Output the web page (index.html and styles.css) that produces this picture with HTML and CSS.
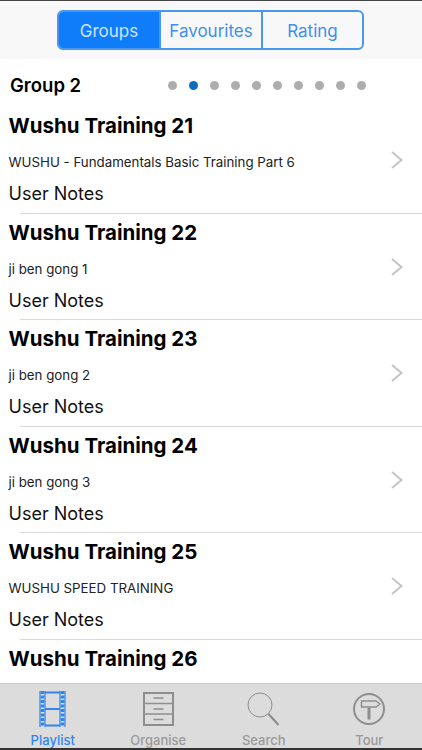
FILE: index.html
```html
<!doctype html>
<html>
<head>
<meta charset="utf-8">
<title>Playlist</title>
<link rel="stylesheet" href="styles.css">
</head>
<body>
<div class="screen">
	<div class="top">
		<div class="segment">
			<div class="seg current">Groups</div>
			<div class="seg">Favourites</div>
			<div class="seg">Rating</div>
		</div>
	</div>
	<div class="group">
		<div class="group_name">Group 2</div>
		<ol class="dots">
			<li></li><li class="current"></li><li></li><li></li><li></li><li></li><li></li><li></li><li></li><li></li>
		</ol>
	</div>
	<div class="list">
		<div class="row">
			<div class="title">Wushu Training 21</div>
			<div class="sub">WUSHU - Fundamentals Basic Training Part 6</div>
			<div class="notes">User Notes</div>
			<svg class="arrow" width="14" height="20" viewBox="0 0 14 20"><path d="M2 2l9.500 8-9.500 8" fill="none" stroke="#c4c4c6" stroke-width="2"/></svg>
		</div>
		<div class="row">
			<div class="title">Wushu Training 22</div>
			<div class="sub">ji ben gong 1</div>
			<div class="notes">User Notes</div>
			<svg class="arrow" width="14" height="20" viewBox="0 0 14 20"><path d="M2 2l9.500 8-9.500 8" fill="none" stroke="#c4c4c6" stroke-width="2"/></svg>
		</div>
		<div class="row">
			<div class="title">Wushu Training 23</div>
			<div class="sub">ji ben gong 2</div>
			<div class="notes">User Notes</div>
			<svg class="arrow" width="14" height="20" viewBox="0 0 14 20"><path d="M2 2l9.500 8-9.500 8" fill="none" stroke="#c4c4c6" stroke-width="2"/></svg>
		</div>
		<div class="row">
			<div class="title">Wushu Training 24</div>
			<div class="sub">ji ben gong 3</div>
			<div class="notes">User Notes</div>
			<svg class="arrow" width="14" height="20" viewBox="0 0 14 20"><path d="M2 2l9.500 8-9.500 8" fill="none" stroke="#c4c4c6" stroke-width="2"/></svg>
		</div>
		<div class="row">
			<div class="title">Wushu Training 25</div>
			<div class="sub">WUSHU SPEED TRAINING</div>
			<div class="notes">User Notes</div>
			<svg class="arrow" width="14" height="20" viewBox="0 0 14 20"><path d="M2 2l9.500 8-9.500 8" fill="none" stroke="#c4c4c6" stroke-width="2"/></svg>
		</div>
		<div class="row">
			<div class="title">Wushu Training 26</div>
		</div>
	</div>
	<div class="tabs">
		<div class="tab current">
			<svg width="27" height="36" viewBox="0 0 27 36">
				<g fill="none" stroke="#2f86f0">
					<path d="M1 0v36M6 0v36M21 0v36M26 0v36" stroke-width="1.200"/>
					<path d="M6 1.500h15M6 18h15M6 34.500h15" stroke-width="1.800"/>
					<path d="M3.500 0v36M23.500 0v36" stroke-width="3.800" stroke-dasharray="3 1.500"/>
				</g>
			</svg>
			<span>Playlist</span>
		</div>
		<div class="tab">
			<svg width="31" height="36" viewBox="0 0 31 36">
				<g fill="none" stroke="#8e8e8e" transform="translate(0 1)">
					<rect x="1" y="1" width="29" height="32" stroke-width="2"/>
					<path d="M1 11.500h29M1 22h29" stroke-width="1.400"/>
					<path d="M10.500 6h10M10.500 17h10M10.500 27.500h10" stroke-width="1.500"/>
				</g>
			</svg>
			<span>Organise</span>
		</div>
		<div class="tab">
			<svg width="33" height="36" viewBox="0 0 33 36">
				<circle cx="13" cy="14" r="12" fill="none" stroke="#8e8e8e" stroke-width="1"/>
				<path d="M21.500 23l10 11" fill="none" stroke="#8e8e8e" stroke-width="2.200"/>
			</svg>
			<span>Search</span>
		</div>
		<div class="tab">
			<svg width="33" height="36" viewBox="0 0 33 36">
				<circle cx="16" cy="18" r="15" fill="none" stroke="#8e8e8e" stroke-width="2"/>
				<path d="M8.500 10h14.500l4 3-4 3h-14.500z" fill="none" stroke="#8e8e8e" stroke-width="1.400"/>
				<path d="M16 16.500v12" fill="none" stroke="#8e8e8e" stroke-width="3"/>
			</svg>
			<span>Tour</span>
		</div>
	</div>
</div>
</body>
</html>
```
FILE: styles.css
```css
*{
	margin:0;
	padding:0;
	box-sizing:border-box;
	list-style:none;
}
html,body{
	height:100%;
	overflow:hidden;
}
body{
	background:#fff;
	font-family:Inter,"Liberation Sans",sans-serif;
	color:#000;
}
.screen{
	width:422px;
	height:750px;
	display:flex;
	flex-direction:column;
	border-top:1px solid #444;
	border-bottom:2px solid #333;
}
.top{
	height:58px;
	padding:9px 1px 0 0;
	background:#f8f8f8;
	display:flex;
	justify-content:center;
}
.segment{
	width:307px;
	height:40px;
	display:flex;
	border:2px solid #4a97f0;
	border-radius:6px;
	overflow:hidden;
}
.seg{
	width:102px;
	border-left:2px solid #4a97f0;
	color:#3f8ff0;
	font-size:17px;
	line-height:38px;
	text-align:center;
}
.seg:first-child{
	width:100px;
	border-left:0;
}
.seg:last-child{
	width:101px;
}
.seg.current{
	background:#0f7dfa;
	color:#cfe4fd;
}
.group{
	height:48px;
	padding:4px 56px 0 10px;
	display:flex;
	align-items:center;
	justify-content:space-between;
}
.group_name{
	font-size:18.500px;
	font-weight:600;
}
.dots{
	display:flex;
	gap:12px;
}
.dots li{
	width:9px;
	height:9px;
	border-radius:50%;
	background:#adadad;
}
.dots .current{
	background:#0f6cbd;
}
.list{
	flex:1;
	min-height:0;
	overflow:hidden;
}
.row{
	height:106.600px;
	padding:0 0 0 8.500px;
	position:relative;
}
.row::after{
	content:"";
	position:absolute;
	left:20px;
	right:0;
	bottom:0;
	border-bottom:1px solid #d9d9d9;
}
.row:last-child::after{
	display:none;
}
.title{
	height:35px;
	padding-top:4px;
	font-size:20.500px;
	font-weight:700;
	line-height:30px;
}
.sub{
	height:36px;
	font-size:13.300px;
	line-height:40px;
	color:#222;
}
.notes{
	height:32px;
	font-size:18px;
	line-height:32px;
	color:#111;
}
.arrow{
	position:absolute;
	right:18px;
	top:43px;
}
.tabs{
	height:65px;
	background:#dcdcdc;
	border-top:1px solid #c8c8c8;
	display:flex;
}
.tab{
	flex:1;
	display:flex;
	flex-direction:column;
	align-items:center;
	padding-top:7px;
	color:#9a9a9a;
	font-size:13px;
	font-weight:500;
}
.tab svg{
	height:36px;
}
.tab span{
	margin-top:5px;
}
.tab.current{
	color:#2f86f0;
}
```
